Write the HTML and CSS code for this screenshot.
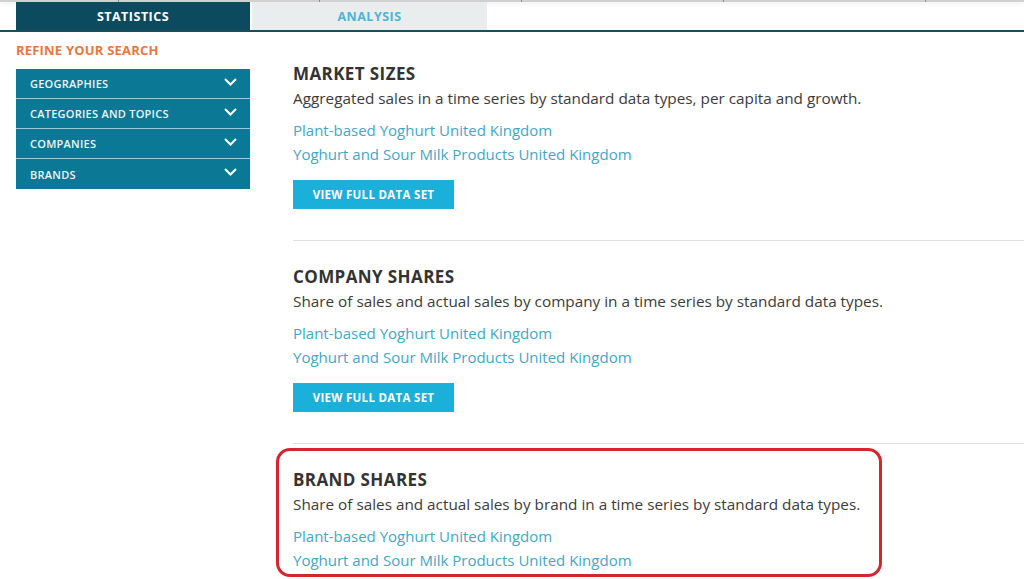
FILE: index.html
```html
<!DOCTYPE html>
<html lang="en">
<head>
<meta charset="utf-8">
<title>Statistics</title>
<link rel="stylesheet" href="styles.css">
</head>
<body>
<div class="topstrip">
  <span class="cell c1"></span><span class="cell c2"></span><span class="cell c3"></span><span class="cell c4"></span><span class="cell c5"></span><span class="cell c6"></span>
</div>
<nav class="tabs">
  <div class="tab tab-active">STATISTICS</div>
  <div class="tab tab-inactive">ANALYSIS</div>
</nav>
<div class="layout">
  <aside class="sidebar">
    <div class="refine">REFINE YOUR SEARCH</div>
    <ul class="filters">
      <li class="filter"><span>GEOGRAPHIES</span><svg class="chev" width="13" height="8" viewBox="0 0 13 8"><polyline points="1,1 6.5,6.5 12,1" fill="none" stroke="#fff" stroke-width="2"/></svg></li>
      <li class="filter"><span>CATEGORIES AND TOPICS</span><svg class="chev" width="13" height="8" viewBox="0 0 13 8"><polyline points="1,1 6.5,6.5 12,1" fill="none" stroke="#fff" stroke-width="2"/></svg></li>
      <li class="filter"><span>COMPANIES</span><svg class="chev" width="13" height="8" viewBox="0 0 13 8"><polyline points="1,1 6.5,6.5 12,1" fill="none" stroke="#fff" stroke-width="2"/></svg></li>
      <li class="filter"><span>BRANDS</span><svg class="chev" width="13" height="8" viewBox="0 0 13 8"><polyline points="1,1 6.5,6.5 12,1" fill="none" stroke="#fff" stroke-width="2"/></svg></li>
    </ul>
  </aside>
  <main class="main">
    <section class="block">
      <h2 class="block-title">MARKET SIZES</h2>
      <p class="block-desc">Aggregated sales in a time series by standard data types, per capita and growth.</p>
      <a class="block-link" href="#">Plant-based Yoghurt United Kingdom</a>
      <a class="block-link" href="#">Yoghurt and Sour Milk Products United Kingdom</a>
      <button class="btn">VIEW FULL DATA SET</button>
    </section>
    <section class="block">
      <h2 class="block-title">COMPANY SHARES</h2>
      <p class="block-desc">Share of sales and actual sales by company in a time series by standard data types.</p>
      <a class="block-link" href="#">Plant-based Yoghurt United Kingdom</a>
      <a class="block-link" href="#">Yoghurt and Sour Milk Products United Kingdom</a>
      <button class="btn">VIEW FULL DATA SET</button>
    </section>
    <section class="block block-last">
      <h2 class="block-title">BRAND SHARES</h2>
      <p class="block-desc">Share of sales and actual sales by brand in a time series by standard data types.</p>
      <a class="block-link" href="#">Plant-based Yoghurt United Kingdom</a>
      <a class="block-link" href="#">Yoghurt and Sour Milk Products United Kingdom</a>
    </section>
  </main>
</div>
<div class="highlight"></div>
</body>
</html>
```
FILE: styles.css
```css
html, body {
  margin: 0;
  padding: 0;
  background: #fff;
  overflow: hidden;
  height: 579px;
}
body {
  font-family: "Open Sans", "Liberation Sans", sans-serif;
  color: #333;
  position: relative;
}
.topstrip {
  height: 2px;
  background: #cfd1d1;
  display: flex;
  box-shadow: 0 1px 5px rgba(0,0,0,0.12);
}
.cell {
  height: 2px;
  border-right: 1px solid #8a8a8a;
  box-sizing: border-box;
}
.c1 { width: 119px; }
.c2 { width: 201px; }
.c3 { width: 202px; }
.c4 { width: 202px; }
.c5 { width: 202px; }
.c6 { flex: 1; border-right: none; }
.tabs {
  display: flex;
  height: 28px;
  padding-left: 16px;
  border-bottom: 2px solid #1a4e5c;
  gap: 2px;
}
.tab {
  width: 234px;
  display: flex;
  align-items: center;
  justify-content: center;
  font-size: 12.5px;
  font-weight: 700;
  letter-spacing: 0.5px;
}
.tab-active {
  background: #0c4b5f;
  color: #fff;
}
.tab-inactive {
  width: 235px;
  background: #e9eded;
  color: #4eb4d4;
}
.layout {
  display: flex;
  gap: 43px;
  padding-left: 16px;
}
.sidebar {
  width: 234px;
  flex: none;
}
.refine {
  margin-top: 10px;
  height: 16px;
  line-height: 16px;
  font-size: 13px;
  font-weight: 700;
  letter-spacing: 0.2px;
  color: #e8773d;
}
.filters {
  list-style: none;
  margin: 11px 0 0;
  padding: 0;
}
.filter {
  height: 29px;
  background: #0b7895;
  border-bottom: 1px solid #9fcbd8;
  display: flex;
  align-items: center;
  justify-content: space-between;
  padding: 0 13px 0 14px;
  color: #eef6f8;
  font-size: 11px;
  font-weight: 600;
  letter-spacing: 0.25px;
}
.filter:last-child {
  border-bottom: none;
  height: 30px;
}
.chev {
  margin-top: -4px;
}
.main {
  flex: 1;
  padding-top: 32px;
}
.block {
  display: flex;
  flex-direction: column;
  align-items: flex-start;
  padding: 0 0 31px;
  border-bottom: 1px solid #dfe1e1;
  margin-bottom: 26px;
}
.block-last {
  border-bottom: none;
}
.block-title {
  margin: 0;
  font-size: 17px;
  line-height: 20px;
  font-weight: 700;
  letter-spacing: 0.4px;
  color: #333;
}
.block-desc {
  margin: 3px 0 9px;
  font-size: 15.3px;
  line-height: 22px;
  color: #3b3b3b;
}
.block-link {
  font-size: 15px;
  line-height: 24px;
  color: #3fa7c9;
  text-decoration: none;
}
.btn {
  margin-top: 14px;
  width: 161px;
  height: 29px;
  border: none;
  background: #1bb0d9;
  color: #fff;
  font-family: inherit;
  font-size: 11.5px;
  font-weight: 700;
  letter-spacing: 0.3px;
  padding: 0;
}
.highlight {
  position: absolute;
  left: 276px;
  top: 448px;
  width: 600px;
  height: 123px;
  border: 3px solid #d9232e;
  border-radius: 14px;
  pointer-events: none;
}
```
